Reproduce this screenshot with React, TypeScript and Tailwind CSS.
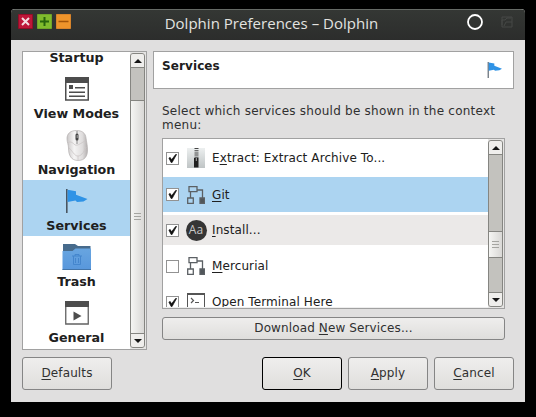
import type { ReactNode } from "react";

function Arrow({ down = false }: { down?: boolean }) {
  return (
    <svg width="8" height="4" viewBox="0 0 8 4" className={down ? "rotate-180" : ""}>
      <path d="M0 4 4 0l4 4z" fill="#151515" />
    </svg>
  );
}

function Scrollbar({ before, thumb }: { before: string; thumb: string }) {
  return (
    <div className="flex w-[15px] shrink-0 flex-col rounded-[3px] border border-[#858581] bg-[#c3c2be]">
      <div className="flex h-[14px] shrink-0 items-center justify-center rounded-t-[2px] border-b border-[#858581] bg-[#efeeec]">
        <Arrow />
      </div>
      <div className={"shrink-0 " + before} />
      <div
        className={
          "flex shrink-0 flex-col items-center justify-center gap-[2px] border-t border-[#858581] bg-linear-to-r from-[#f5f5f3] to-[#d9d8d6] " +
          thumb
        }
      >
        <div className="h-px w-[7px] bg-[#a5a5a1]" />
        <div className="h-px w-[7px] bg-[#a5a5a1]" />
        <div className="h-px w-[7px] bg-[#a5a5a1]" />
      </div>
      <div className="grow" />
      <div className="flex h-[14px] shrink-0 items-center justify-center rounded-b-[2px] border-t border-[#858581] bg-[#efeeec]">
        <Arrow down />
      </div>
    </div>
  );
}

function Flag({ size }: { size: number }) {
  return (
    <svg width={size} height={size} viewBox="0 0 24 24">
      <path d="M1 0h1.600v24H1z" fill="#4a5560" />
      <path d="M2.600.8 11 2.200v3.500l11.500 4.300-4 2.500-6.500.5-1.500-1.500-7.900 1.500z" fill="#2f93e6" />
    </svg>
  );
}

function ViewModesIcon() {
  return (
    <svg width="24" height="24" viewBox="0 0 24 24">
      <path d="M.75 1h22.500v22H.75z" fill="#fff" stroke="#4d4d4d" strokeWidth="1.500" />
      <path d="M0 0h24v6H0zM4 8h4v4H4zM10 10h10v1.500H10zM4 14.500h16V16H4zM4 18.500h16V20H4z" fill="#4d4d4d" />
    </svg>
  );
}

function MouseIcon() {
  return (
    <svg width="22" height="31" viewBox="0 0 22 31">
      <defs>
        <linearGradient id="shell" x1="0" x2="1">
          <stop offset="0" stopColor="#c9c6c6" />
          <stop offset=".35" stopColor="#f5f4f4" />
          <stop offset=".75" stopColor="#dfdddd" />
          <stop offset="1" stopColor="#b4b0b0" />
        </linearGradient>
      </defs>
      <path d="M10.500.5C4 .5.8 4 1 9c.1 3 1.500 6 1.500 9C2.500 25 5 30.500 12 30.500S21.500 26 21.500 20c0-5-1-8-1.500-12C19.500 3 16 .5 10.500.5z" fill="url(#shell)" stroke="#b4b0b0" strokeWidth=".7" />
      <path d="M2 13c2-2 4-1 7 2 3 1 6-2 10-4M3 18c3 2 5 8 9 8s7-6 8-9M12 26v4" fill="none" stroke="#cbc7c7" strokeWidth=".8" />
      <path d="M11 1v3M11 10v4" stroke="#888" strokeWidth="1" />
      <rect x="9.500" y="3.500" width="3" height="7" rx="1.500" fill="#444" />
      <path d="M11.200 5v3" stroke="#aaa" />
    </svg>
  );
}

function FolderIcon() {
  return (
    <svg width="30" height="27" viewBox="0 0 30 27">
      <defs>
        <linearGradient id="folder" x2="0" y2="1">
          <stop offset="0" stopColor="#68a5e0" />
          <stop offset="1" stopColor="#5897dc" />
        </linearGradient>
      </defs>
      <path d="M1 0h12l3 2h12.500v22H1z" fill="#476b8c" />
      <path d="M.5 7h10l3-2.500h15.500V26H.5z" fill="url(#folder)" />
      <path d="M.5 25.500h28.500" stroke="#4374a7" />
      <path d="M10 12h10M13 12v-1.500h4V12M11.500 12v8.500h7V12M13.500 14v5M16.500 14v5" fill="none" stroke="#4283cb" strokeWidth=".9" />
    </svg>
  );
}

function GeneralIcon() {
  return (
    <svg width="24" height="24" viewBox="0 0 24 24">
      <path d="M.75 1h22.500v22H.75z" fill="#fff" stroke="#626262" strokeWidth="1.300" />
      <path d="M0 0h24v6H0zM8.500 10.500v9l8-4.500z" fill="#4d4d4d" />
    </svg>
  );
}

function ZipIcon() {
  return (
    <svg width="18" height="20" viewBox="0 0 18 20">
      <defs>
        <linearGradient id="zip" x2="0" y2="1">
          <stop offset="0" stopColor="#edf0f0" />
          <stop offset="1" stopColor="#bfc4c5" />
        </linearGradient>
      </defs>
      <path d="M0 0h18v20H0z" fill="url(#zip)" />
      <path d="M9.500 0v11" stroke="#444" strokeWidth="4" strokeDasharray="1 1.200" />
      <path d="M7 10h4.500v9.500H7z" fill="#202020" />
      <path d="M9.300 10v3" stroke="#aaa" />
    </svg>
  );
}

function TreeIcon() {
  return (
    <svg width="18" height="18" viewBox="0 0 18 18" fill="none" stroke="#5b6064" strokeWidth="1.300">
      <path d="M2 .7h8v5H2zM.7 12h5.600v5.300H.7zM3.500 12V5.700M10 4h5.500v8" />
      <path d="M13 12h4.500v5.300H13z" fill="#50565a" />
    </svg>
  );
}

function FontIcon() {
  return (
    <div className="flex size-[21px] shrink-0 items-center justify-center rounded-full bg-[#353535] font-['Open_Sans',sans-serif] text-[12px] leading-none text-[#c9c9c9]">
      Aa
    </div>
  );
}

function TerminalIcon() {
  return (
    <svg width="18" height="18" viewBox="0 0 18 18" fill="none" stroke="#555">
      <path d="M.5 1h17v16.500H.5z" fill="#fff" />
      <path d="M0 1h18" strokeWidth="2" />
      <path d="m4 5 2.500 2.500L4 10M8 9.500h4" strokeWidth="1.200" />
    </svg>
  );
}

function NavItem({ icon, label, selected = false }: { icon: ReactNode; label: string; selected?: boolean }) {
  return (
    <div className={"flex h-14 shrink-0 flex-col items-center " + (selected ? "bg-[#acd4f1]" : "")}>
      <div className="flex h-[38px] items-center justify-center pt-[4px]">{icon}</div>
      <div className="text-[12.7px] leading-4 font-bold whitespace-nowrap">{label}</div>
    </div>
  );
}

function ServiceRow({
  icon,
  checked = true,
  tone = "",
  children,
}: {
  icon: ReactNode;
  checked?: boolean;
  tone?: string;
  children: ReactNode;
}) {
  return (
    <div className={"flex h-9 shrink-0 items-center pl-[3px] " + tone}>
      <div className="flex size-[13px] shrink-0 items-center justify-center border border-[#929292] bg-white">
        {checked && (
          <svg width="9" height="9" viewBox="0 0 10 10">
            <path d="M1 4.500 2.500 4 4 6.500 8.500.5h1L4.500 9.500H3.500z" fill="#111" stroke="#111" strokeWidth=".8" />
          </svg>
        )}
      </div>
      <div className="ml-[5px] flex w-[24px] shrink-0 justify-center">{icon}</div>
      <div className="ml-[4px] text-[12px] leading-4 tracking-[0.1px] whitespace-nowrap">{children}</div>
    </div>
  );
}

function U({ children }: { children: string }) {
  return <span className="underline decoration-1 underline-offset-2">{children}</span>;
}

function Button({ className, children }: { className: string; children: ReactNode }) {
  return (
    <button
      className={
        "flex shrink-0 items-center justify-center rounded-[3px] border bg-linear-to-b from-[#efeeed] to-[#dfdedc] pb-[2px] text-[12px] leading-4 tracking-[0.12px] whitespace-nowrap text-[#303030] " +
        className
      }
    >
      <span>{children}</span>
    </button>
  );
}

export default function App() {
  return (
    <div className="h-[417px] w-[536px] overflow-hidden bg-black pt-[9px] pl-[11px] font-['DejaVu_Sans',sans-serif] text-[#202020]">
      <div className="flex h-[393px] w-[514px] flex-col overflow-hidden rounded-t-[4px] bg-[#e0dfdf]">
        <header className="flex h-[31px] shrink-0 items-center border-t border-[#666a66] bg-linear-to-b from-[#343734] to-[#2c2d2c]">
          <div className="flex w-[65px] shrink-0 gap-[4px] pb-[7px] pl-[7px]">
            <svg width="15" height="15" viewBox="0 0 15 15" className="shrink-0">
              <path d="M.5.5h14v14H.5z" fill="#bd1638" stroke="#930d27" />
              <path d="m4 4 7 7M11 4l-7 7" stroke="#f4dce0" strokeWidth="2" />
            </svg>
            <svg width="15" height="15" viewBox="0 0 15 15" className="shrink-0">
              <path d="M.5.5h14v14H.5z" fill="#80bb2d" stroke="#70a529" />
              <path d="M7.500 3v9M3 7.500h9" stroke="#28640d" strokeWidth="2" />
            </svg>
            <svg width="15" height="15" viewBox="0 0 15 15" className="shrink-0">
              <path d="M.5.5h14v14H.5z" fill="#ee942b" stroke="#d8842b" />
              <path d="M2.500 7.500h10" stroke="#a35409" strokeWidth="1.500" />
            </svg>
          </div>
          <div className="grow pb-[5px] text-center font-['Open_Sans',sans-serif] text-[15px] leading-5 tracking-[0.03px] whitespace-nowrap text-[#e3e3e0]">
            Dolphin Preferences – Dolphin
          </div>
          <div className="flex w-[58px] shrink-0 items-center gap-[18px] pb-[6px]">
            <svg width="16" height="16" viewBox="0 0 16 16">
              <circle cx="8" cy="8" r="7" fill="none" stroke="#fff" strokeWidth="1.800" />
            </svg>
            <svg width="12" height="12" viewBox="0 0 12 12" fill="none" stroke="#464946">
              <path d="M1 11V1h10v10zM1 9V4h3l2-2h4M3 10l2-4h6" />
            </svg>
          </div>
        </header>

        <main className="mt-[11px] flex h-[299px] shrink-0 gap-[6px] px-[11px]">
          <nav className="flex w-[125px] shrink-0 border border-[#a1a1a1] bg-[#e5e4e3] pr-px">
            <div className="flex grow flex-col justify-end overflow-hidden bg-white pb-px">
              <NavItem icon={null} label="Startup" />
              <NavItem icon={<ViewModesIcon />} label="View Modes" />
              <NavItem icon={<MouseIcon />} label="Navigation" />
              <NavItem icon={<Flag size={24} />} label="Services" selected />
              <NavItem icon={<FolderIcon />} label="Trash" />
              <NavItem icon={<GeneralIcon />} label="General" />
            </div>
            <div className="flex pt-px pb-px">
              <Scrollbar before="h-[32px]" thumb="grow-[1000]" />
            </div>
          </nav>

          <section className="flex grow flex-col">
            <div className="flex h-[38px] shrink-0 justify-between border border-[#a1a1a1] bg-white pr-[10px] pl-[8px]">
              <h1 className="pt-[6px] text-[12px] leading-4 font-bold tracking-[0.1px]">Services</h1>
              <div className="pt-[10px]">
                <Flag size={16} />
              </div>
            </div>
            <div className="flex grow flex-col px-[9px]">
              <p className="mt-[15px] h-[34px] text-[12px] leading-[14px] tracking-[0.235px] text-[#303030]">
                <span className="whitespace-nowrap">Select which services should be shown in the context</span>
                <br />
                menu:
              </p>
              <div className="flex h-[171px] border border-[#a1a1a1] bg-[#e5e4e3] pr-px">
                <div className="flex grow flex-col overflow-hidden border-b border-[#eeeeee] bg-white pt-px">
                  <ServiceRow icon={<ZipIcon />}>
                    E<U>x</U>tract: Extract Archive To...
                  </ServiceRow>
                  <ServiceRow icon={<TreeIcon />} tone="border-t border-white bg-[#acd4f1]">
                    <U>G</U>it
                  </ServiceRow>
                  <ServiceRow icon={<FontIcon />} tone="border-t-[3px] border-b-[3px] border-white bg-[#ebe9e8]">
                    <U>I</U>nstall...
                  </ServiceRow>
                  <ServiceRow icon={<TreeIcon />} checked={false}>
                    <U>M</U>ercurial
                  </ServiceRow>
                  <ServiceRow icon={<TerminalIcon />}>
                    <U>O</U>pen Terminal Here
                  </ServiceRow>
                </div>
                <div className="flex pt-px pb-px">
                  <Scrollbar before="h-[76px]" thumb="h-[27px] border-b" />
                </div>
              </div>
              <Button className="mt-2 h-[23px] border-[#858585]">
                Download <U>N</U>ew Services...
              </Button>
            </div>
          </section>
        </main>

        <footer className="mt-[7px] flex gap-[6px] px-[11px]">
          <Button className="mr-auto h-[33px] w-[90px] border-[#858585]">
            <U>D</U>efaults
          </Button>
          <Button className="h-[33px] w-[80px] border-black">
            <U>O</U>K
          </Button>
          <Button className="h-[33px] w-[80px] border-[#858585]">
            <U>A</U>pply
          </Button>
          <Button className="h-[33px] w-[80px] border-[#858585]">
            <U>C</U>ancel
          </Button>
        </footer>
      </div>
    </div>
  );
}
